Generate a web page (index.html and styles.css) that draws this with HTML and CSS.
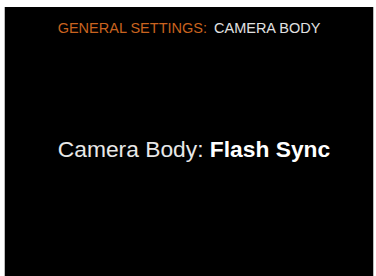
FILE: index.html
```html
<!DOCTYPE html>
<html>
<head>
<meta charset="utf-8">
<link rel="stylesheet" href="styles.css">
</head>
<body>
<div class="screen">
  <div class="header"><span class="section">GENERAL SETTINGS:</span><span class="page">CAMERA BODY</span></div>
  <div class="main">Camera Body: <b>Flash Sync</b></div>
</div>
</body>
</html>
```
FILE: styles.css
```css
html, body { margin: 0; padding: 0; background: #fff; }
body { padding: 7px 3px 0 5px; width: 376px; height: 276px; box-sizing: border-box; overflow: hidden; }
.screen {
  background: #000;
  height: 269px;
  box-shadow: -1px 0 0 #bbb, 1px 0 0 #bbb;
  display: flex;
  flex-direction: column;
  align-items: center;
  font-family: "Liberation Sans", Arial, sans-serif;
}
.header {
  margin-top: 12px;
  font-size: 14.5px;
  line-height: 18px;
}
.section { color: #c9631f; margin-right: 7px; }
.page { color: #e0e0e0; }
.main {
  margin-top: 99px;
  padding-left: 10px;
  color: #e8e8e8;
  font-size: 22.8px;
  line-height: 27px;
}
.main b { font-weight: bold; color: #fff; }
```
